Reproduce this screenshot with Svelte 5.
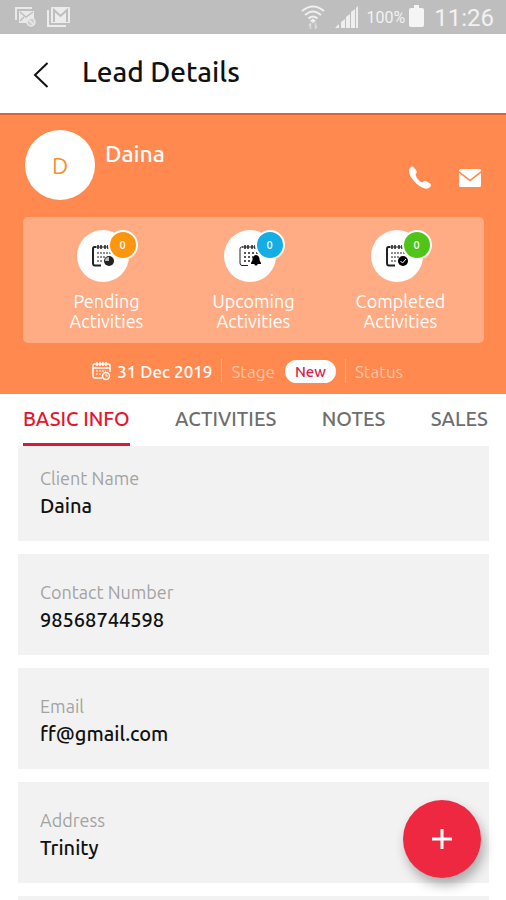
<script lang="ts">
  type Activity = { kind: 'pending' | 'upcoming' | 'completed'; label: string; count: number };

  const activities: Activity[] = [
    { kind: 'pending', label: 'Pending', count: 0 },
    { kind: 'upcoming', label: 'Upcoming', count: 0 },
    { kind: 'completed', label: 'Completed', count: 0 }
  ];

  const tabs = ['BASIC INFO', 'ACTIVITIES', 'NOTES', 'SALES'];

  const fields = [
    { label: 'Client Name', value: 'Daina' },
    { label: 'Contact Number', value: '98568744598' },
    { label: 'Email', value: 'ff@gmail.com' },
    { label: 'Address', value: 'Trinity' },
    { label: '', value: '' }
  ];

  let activeTab = $state('BASIC INFO');
</script>

<div class="screen">
  <div class="status-bar">
    <svg width="24" height="22" viewBox="0 0 24 22" fill="none" stroke="#e9e9e9" stroke-width="2">
      <path d="M2 14V2h16" />
      <path d="M5 5h15v7l-4 5H5z" fill="#e9e9e9" stroke="none" />
      <path d="M6 6l6 5 7-5M6 15l4-4" stroke="#bebebe" stroke-width="1.5" />
      <circle cx="17" cy="16" r="4" stroke-width="1.5" fill="#cfcfcf" />
      <path d="M14 13l6 6" stroke-width="1.5" />
    </svg>
    <svg width="26" height="22" viewBox="0 0 26 22" fill="none" stroke="#ececec" stroke-width="2">
      <path d="M2 4v16h18" />
      <rect x="5" y="1" width="19" height="16" rx="1" fill="#ececec" stroke="none" />
      <path d="M8 16V4l6.500 6L21 4v12" stroke="#bebebe" />
    </svg>
    <span class="spacer"></span>
    <svg width="24" height="26" viewBox="0 0 24 26" fill="none" stroke="#efefef" stroke-width="2">
      <path d="M1 7q11-9 22 0M4 11q8-7 16 0M7.500 14.500q4.500-4 9 0" />
      <path d="M12 14.500l3 2.500-3 2-3-2z" fill="#efefef" stroke="none" />
      <path d="M9.500 19v6M8 22l1.500-2.500M14.500 19v6M16 22l-1.500 2.500" stroke="#dadada" stroke-width="1.500" />
    </svg>
    <svg class="signal" width="24" height="24" viewBox="0 0 24 24" fill="#efefef">
      <path d="M0 23l4-4v4zM6 17l4-3v9H6zM11 12l4-3v14h-4zM16 7l4-3v19h-4zM21 3l2-2v22h-2z" />
    </svg>
    <span class="percent">100%</span>
    <svg class="battery" width="15" height="24" viewBox="0 0 15 24" fill="#f5f5f5">
      <path d="M5 0h5v3h3q2 0 2 2v15q0 2-2 2H2q-2 0-2-2V5q0-2 2-2h3z" />
    </svg>
    <span class="clock">11:26</span>
  </div>

  <header class="app-bar">
    <button class="back" aria-label="Back">
      <svg width="16" height="26" viewBox="0 0 16 26" fill="none" stroke="#111" stroke-width="2"><path d="M14.500 1L2 13l12.500 12" /></svg>
    </button>
    <h1>Lead Details</h1>
  </header>

  <section class="hero">
    <div class="person">
      <div class="avatar">D</div>
      <h2>Daina</h2>
      <div class="contact">
        <button aria-label="Call">
          <svg width="24" height="24" viewBox="0 0 24 24" fill="#fff">
            <path d="M2 2Q4-.5 6 1.500L8.500 5Q9.500 6.500 7.500 8.500 8 12 12 15.500q2 1.300 3 .5 1.500-1.800 3-1l4 2.500q2 1.500 0 3.500-2 2.500-5 1.500Q11 21 6 15 .5 9 1 4.500 1 3 2 2z" />
          </svg>
        </button>
        <button aria-label="Email">
          <svg width="22" height="18" viewBox="0 0 22 18" fill="#fff">
            <path d="M1.500 0h19q1.500 0 1.500 1.500V2L11 10.500 0 2v-.5Q0 0 1.500 0z" />
            <path d="M0 4L11 12.500 22 4v12.500q0 1.500-1.500 1.500h-19Q0 18 0 16.500z" />
          </svg>
        </button>
      </div>
    </div>

    <div class="activities">
      {#each activities as item}
        <a class="activity" href="#{item.kind}">
          <span class="disc">
            <svg width="24" height="24" viewBox="0 0 24 24" fill="none" stroke="#222">
              <path d="M5 3H3.500Q2 3 2 5v14q0 2.500 2 2.500h6" stroke-width={item.kind === 'upcoming' ? 1 : 2} />
              <path d="M4 3h15" stroke-width="1" />
              <path d="M7 1v4M10 1v4M14 1v4M17 1v4" stroke-width="1.500" />
              <path d="M6 9h14M6 13h9M6 17h6" stroke-width={item.kind === 'upcoming' ? 1.5 : 1} stroke-dasharray={item.kind === 'upcoming' ? '2 2' : '2 1'} />
              {#if item.kind === 'pending'}
                <circle cx="18" cy="17" r="5" fill="#222" stroke="none" />
                <path d="M18 17v-4a4 4 0 0 0-4 4z" fill="#bbb" stroke="none" />
              {:else if item.kind === 'upcoming'}
                <path d="M18 11q4 1 3.500 5l1.500 3v1h-3l-2 2-2-2h-3v-1l1.500-3Q14 12 18 11z" fill="#000" stroke="none" />
              {:else}
                <circle cx="18" cy="17" r="5" fill="#000" stroke="none" />
                <path d="M15.500 17l2 2 3.500-4" stroke="#fff" />
              {/if}
            </svg>
            <span class="badge {item.kind}">{item.count}</span>
          </span>
          <span class="activity-label">{item.label}<br />Activities</span>
        </a>
      {/each}
    </div>

    <div class="meta">
      <svg width="19" height="20" viewBox="0 0 19 20" fill="none" stroke="#fff" stroke-width="1.500">
        <path d="M10 17H3q-2 0-2-2V5q0-2 2-2h13q2 0 2 2v6M1 7h17" />
        <path d="M5 1v4M8 1v4M11 1v4M14 1v4" />
        <path d="M4 10h10M4 13h6" stroke-width="1" stroke-dasharray="2 1" />
        <circle cx="14" cy="15" r="3.500" />
        <path d="M14 13v2h2" stroke-width="1" />
      </svg>
      <span class="date">31 Dec 2019</span>
      <span class="divider"></span>
      <span class="faded">Stage</span>
      <span class="pill">New</span>
      <span class="divider"></span>
      <span class="faded">Status</span>
    </div>
  </section>

  <nav class="tabs">
    {#each tabs as tab}
      <button class:active={activeTab === tab} onclick={() => (activeTab = tab)}>{tab}</button>
    {/each}
  </nav>

  <dl class="fields">
    {#each fields as field}
      <div class="field">
        <dt>{field.label}</dt>
        <dd>{field.value}</dd>
      </div>
    {/each}
  </dl>

  <button class="fab" aria-label="Add">
    <svg width="20" height="20" viewBox="0 0 20 20" stroke="#fff" stroke-width="3"><path d="M10 0v20M0 10h20" /></svg>
  </button>
</div>

<style>
  :global(body) {
    margin: 0;
    background: #fff;
  }
  .screen {
    display: flex;
    flex-direction: column;
    height: 100vh;
    overflow: hidden;
    font-family: Ubuntu, 'Noto Sans', sans-serif;
    color: #111;
  }
  button {
    padding: 0;
    border: 0;
    background: none;
    font-family: inherit;
    cursor: pointer;
  }
  svg { display: block; flex-shrink: 0; }
  h1, h2, dl, dt, dd { margin: 0; }

  .status-bar {
    display: flex;
    align-items: center;
    flex-shrink: 0;
    gap: 8px;
    height: 34px;
    padding: 0 12px 0 14px;
    box-sizing: border-box;
    background: #bebebe;
    color: #f2f2f2;
    font-family: Roboto, sans-serif;
  }
  .spacer { flex: 1; }
  .signal { margin-left: 2px; }
  .percent { font-size: 16px; }
  .battery { margin-left: -4px; }
  .clock {
    margin: 2px 0 0 2px;
    font-size: 24px;
  }

  .app-bar {
    display: flex;
    align-items: center;
    flex-shrink: 0;
    gap: 33px;
    height: 79px;
    padding: 0 33px;
    box-sizing: border-box;
  }
  .back { margin-top: 2px; }
  h1 {
    padding-bottom: 3px;
    font-size: 28px;
    font-weight: 500;
    line-height: 32px;
  }

  .hero {
    flex-shrink: 0;
    height: 281px;
    padding: 15px 22px 0 23px;
    box-sizing: border-box;
    border-top: 2px solid #d9662c;
    background: #ff894e;
    color: #fff;
  }
  .person {
    display: flex;
    gap: 10px;
    height: 70px;
    padding-left: 2px;
  }
  .avatar {
    display: flex;
    align-items: center;
    justify-content: center;
    width: 70px;
    height: 70px;
    border-radius: 50%;
    background: #fff;
    color: #f2922c;
    font-size: 23px;
  }
  h2 {
    flex: 1;
    padding-top: 9px;
    font-size: 23px;
    font-weight: 500;
    line-height: 30px;
  }
  .contact {
    display: flex;
    align-items: center;
    align-self: flex-end;
    gap: 27px;
    height: 44px;
    padding-right: 3px;
  }

  .activities {
    display: flex;
    justify-content: center;
    height: 126px;
    margin-top: 17px;
    padding: 13px 9px 0;
    box-sizing: border-box;
    border-radius: 5px;
    background: #ffac84;
  }
  .activity {
    display: flex;
    flex: 0 1 147px;
    flex-direction: column;
    align-items: center;
    color: #fff;
    text-align: center;
    text-decoration: none;
  }
  .disc {
    position: relative;
    display: flex;
    align-items: center;
    justify-content: center;
    width: 52px;
    height: 52px;
    margin-right: 8px;
    border-radius: 50%;
    background: #fff;
  }
  .badge {
    position: absolute;
    top: 0;
    right: -9px;
    width: 26px;
    height: 26px;
    border: 2px solid #fff;
    border-radius: 50%;
    font-size: 11px;
    font-weight: 500;
    line-height: 26px;
  }
  .badge.pending { background: #fc950f; }
  .badge.upcoming { background: #14aee5; }
  .badge.completed { background: #50c418; }
  .activity-label {
    margin-top: 9px;
    font-size: 18px;
    line-height: 20px;
  }

  .meta {
    display: flex;
    align-items: center;
    height: 56px;
    padding-left: 15%;
    font-size: 17px;
  }
  .date {
    margin-left: 6px;
    font-weight: 500;
  }
  .divider {
    width: 1px;
    height: 24px;
    margin: 0 9px;
    background: #ffb08a;
  }
  .faded { color: #ffc3a5; }
  .pill {
    margin-left: 10px;
    padding: 0 10px;
    border-radius: 12px;
    background: #fff;
    color: #d81e4a;
    font-size: 15px;
    font-weight: 500;
    line-height: 23px;
  }

  .tabs {
    position: relative;
    z-index: 1;
    display: flex;
    flex-shrink: 0;
    justify-content: space-between;
    height: 52px;
    padding: 0 18px 0 23px;
    box-sizing: border-box;
    background: #fff;
  }
  .tabs button {
    border-bottom: 3px solid transparent;
    color: #6e6e6e;
    font-size: 20px;
    font-weight: 500;
    white-space: nowrap;
  }
  .tabs button.active {
    border-color: #da1938;
    color: #e8142c;
  }

  .fields {
    display: flex;
    flex: 1;
    flex-direction: column;
    gap: 13px;
    min-height: 0;
    margin-top: -6px;
    padding: 0 17px 0 18px;
    overflow: hidden;
  }
  .field {
    flex-shrink: 0;
    height: 101px;
    padding: 24px 22px 0;
    box-sizing: border-box;
    background: #f2f2f2;
  }
  dt {
    color: #a3a3a3;
    font-size: 18px;
    line-height: 28px;
  }
  dd {
    font-size: 20px;
    font-weight: 500;
    line-height: 28px;
  }

  .fab {
    position: fixed;
    right: 25px;
    bottom: 22px;
    display: flex;
    align-items: center;
    justify-content: center;
    width: 78px;
    height: 78px;
    border-radius: 50%;
    background: #ee2840;
    box-shadow: 3px 7px 12px rgba(0, 0, 0, 0.3);
  }
</style>
